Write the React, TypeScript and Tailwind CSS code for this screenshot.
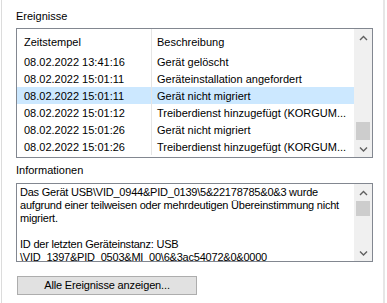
import React from "react";

type Row = { time: string; text: string; selected?: boolean };

const rows: Row[] = [
  { time: "08.02.2022 13:41:16", text: "Gerät gelöscht" },
  { time: "08.02.2022 15:01:11", text: "Geräteinstallation angefordert" },
  { time: "08.02.2022 15:01:11", text: "Gerät nicht migriert", selected: true },
  { time: "08.02.2022 15:01:12", text: "Treiberdienst hinzugefügt (KORGUM..." },
  { time: "08.02.2022 15:01:26", text: "Gerät nicht migriert" },
  { time: "08.02.2022 15:01:26", text: "Treiberdienst hinzugefügt (KORGUM..." },
];

function Chevron({ down }: { down?: boolean }) {
  return (
    <svg width="9" height="6" viewBox="0 0 9 6">
      <polyline
        points={down ? "1,1.5 4.5,5 8,1.5" : "1,5 4.5,1.5 8,5"}
        fill="none"
        stroke="#606060"
        strokeWidth="1.4"
      />
    </svg>
  );
}

function ScrollBar({ thumbTop, thumbHeight }: { thumbTop?: boolean; thumbHeight: string }) {
  return (
    <div className="w-[18px] bg-[#f0f0f0] flex flex-col shrink-0">
      <div className="h-[17px] flex items-center justify-center">
        <Chevron />
      </div>
      <div className={`flex-1 flex flex-col ${thumbTop ? "justify-start" : "justify-end"}`}>
        <div className={`mx-[2px] bg-[#cdcdcd] ${thumbHeight}`} />
      </div>
      <div className="h-[17px] flex items-center justify-center">
        <Chevron down />
      </div>
    </div>
  );
}

export default function App() {
  return (
    <div
      className="w-[387px] h-[303px] bg-white flex text-[11px] text-black overflow-hidden"
      style={{ fontFamily: '"Liberation Sans", Arial, sans-serif' }}
    >
      <div className="w-px" />
      <div className="w-px bg-[#dcdcdc]" />
      <div className="w-[14px]" />
      <div className="w-[357px] flex flex-col">
        <div className="mt-[10px] h-[13px] leading-[13px]">Ereignisse</div>

        {/* event list */}
        <div className="mt-[5px] h-[130px] border border-[#828790] flex">
          <div className="flex-1 flex flex-col overflow-hidden">
            <div className="h-[24px] flex shrink-0">
              <div className="w-[135px] border-r border-[#e5e5e5] pl-[7px] pt-[7px] leading-[13px]">
                Zeitstempel
              </div>
              <div className="flex-1 pl-[5px] pt-[7px] leading-[13px]">Beschreibung</div>
            </div>
            {rows.map((r, i) => (
              <div
                key={i}
                className={clsx("h-[17px] flex shrink-0 leading-[17px]", r.selected && "bg-[#cce8ff]")}
              >
                <div className="w-[135px] border-r border-[#e5e5e5] pl-[7px] pt-px whitespace-nowrap">
                  {r.time}
                </div>
                <div className="flex-1 pl-[5px] pt-px whitespace-nowrap overflow-hidden">{r.text}</div>
              </div>
            ))}
          </div>
          <ScrollBar thumbHeight="h-[18px]" />
        </div>

        <div className="mt-[6px] h-[13px] leading-[13px]">Informationen</div>

        {/* info text box */}
        <div className="mt-[6px] h-[79px] border border-[#828790] flex">
          <div className="flex-1 overflow-hidden pl-[3px] pt-[2px] leading-[13px] whitespace-nowrap tracking-[-0.22px]">
            Das Gerät USB\VID_0944&amp;PID_0139\5&amp;22178785&amp;0&amp;3 wurde
            <br />
            aufgrund einer teilweisen oder mehrdeutigen Übereinstimmung nicht
            <br />
            migriert.
            <br />
            <br />
            ID der letzten Geräteinstanz: USB
            <br />
            \VID_1397&amp;PID_0503&amp;MI_00\6&amp;3ac54072&amp;0&amp;0000
          </div>
          <ScrollBar thumbTop thumbHeight="h-[15px]" />
        </div>

        <button className="mt-[14px] ml-px w-[180px] h-[19px] bg-[#e1e1e1] border border-[#adadad] flex items-center justify-center leading-[13px] tracking-[-0.15px]">
          Alle Ereignisse anzeigen...
        </button>
      </div>
      <div className="w-[10px]" />
      <div className="w-[2px] bg-[#e6e6e6]" />
    </div>
  );
}

function clsx(...a: (string | false | undefined)[]) {
  return a.filter(Boolean).join(" ");
}
